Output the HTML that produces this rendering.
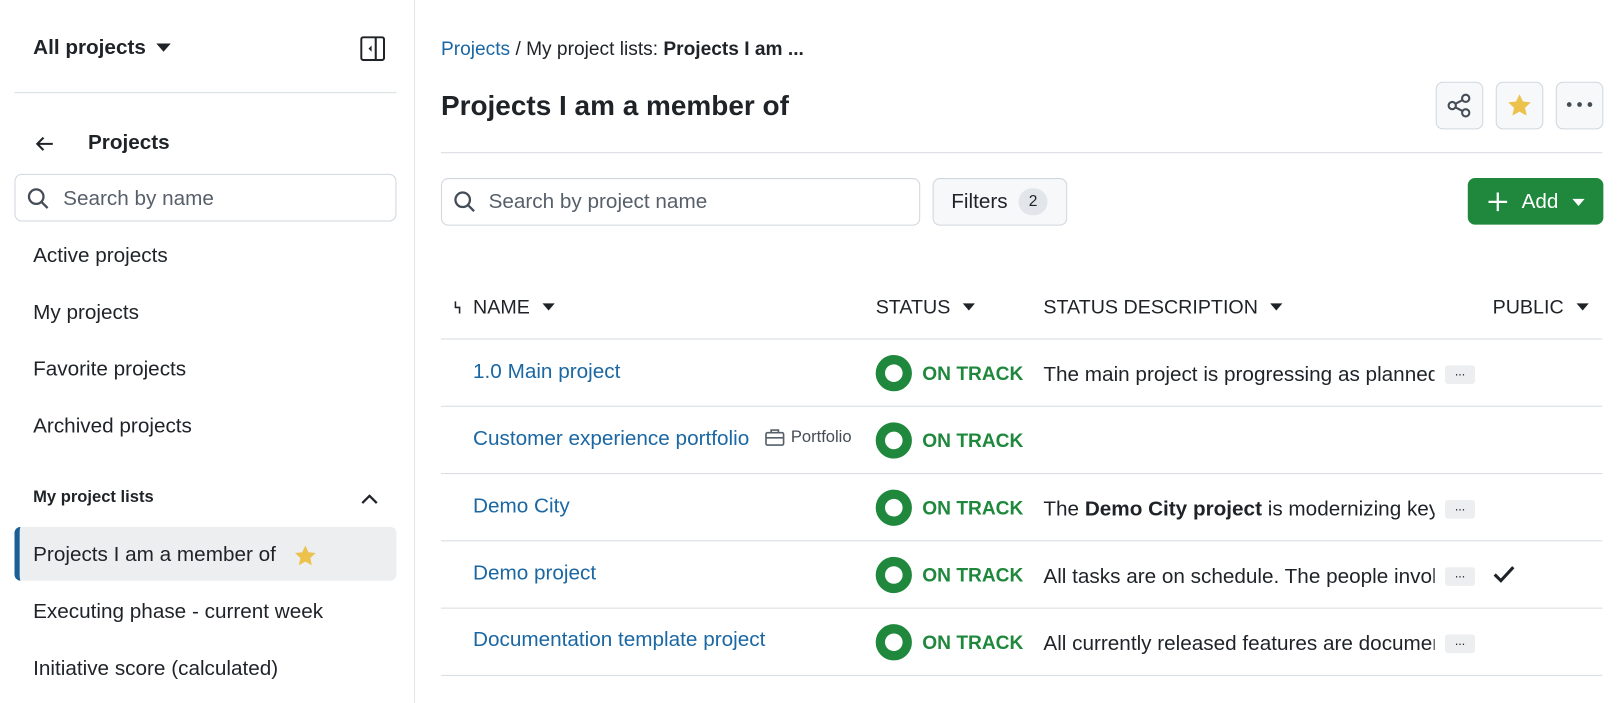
<!DOCTYPE html>
<html><head><meta charset="utf-8"><style>
*{box-sizing:border-box;margin:0;padding:0}
body{width:1623px;height:679px;overflow:hidden;background:#fff;font-family:"Liberation Sans",sans-serif;color:#1f2328;font-size:20px;position:relative}
#w{position:absolute;left:0;top:0;width:1568px;height:656px;transform:scale(1.0351);transform-origin:0 0}
.a{position:absolute;white-space:nowrap}
.side{position:absolute;left:0;top:0;width:401px;height:679px;border-right:1px solid #e4e6e9}
.link{color:#1a67a3}
.hr{position:absolute;height:1px;background:#d8dde3}
.btn{position:absolute;border:1px solid #d0d7de;background:#f6f8fa;border-radius:7px}
.ell{position:absolute;left:1396px;width:29px;height:18px;background:#eceef0;border-radius:3px;font-size:12px;text-align:center;line-height:12px;color:#1f2328}
.st{position:absolute;left:846px;width:35px;height:35px;border-radius:50%;border:9px solid #1f883d}
.stt{position:absolute;left:891px;color:#1f883d;font-weight:bold;font-size:18.5px}
.desc{position:absolute;left:1008px;width:378px;overflow:hidden;white-space:nowrap}
.th{position:absolute;top:287px;white-space:nowrap;font-size:19px}
.th svg{margin-left:12px;vertical-align:3px}
</style></head><body><div id="w">
<div class="side">
<div class="a" style="left:32px;top:35px;font-weight:bold">All projects</div>
<svg class="a" style="left:151px;top:42px" width="14" height="8"><path d="M0 0h14L7 8z" fill="#1f2328"/></svg>
<svg class="a" style="left:348px;top:35px" width="24" height="24" fill="none" stroke="#1f2328" stroke-width="2"><rect x="1" y="1" width="22" height="22" rx="2"/><path d="M15 1v22"/><path d="M11 9v6l-3-3z" fill="#1f2328" stroke="none"/></svg>
<div class="hr" style="left:14px;top:89px;width:369px"></div>
<svg class="a" style="left:34px;top:131px" width="18" height="16" fill="none" stroke="#1f2328" stroke-width="2"><path d="M17 8H2M8 2L2 8l6 6"/></svg>
<div class="a" style="left:85px;top:127px;font-weight:bold">Projects</div>
<div class="a" style="left:14px;top:168px;width:369px;height:46px;border:1px solid #d0d7de;border-radius:7px"></div>
<svg class="a" style="left:26px;top:181px" width="22" height="22" fill="none" stroke="#444c56" stroke-width="2.2"><circle cx="9" cy="9" r="7"/><path d="M14 14l6 6"/></svg>
<div class="a" style="left:61px;top:181px;color:#57606a">Search by name</div>
<div class="a" style="left:32px;top:236px">Active projects</div>
<div class="a" style="left:32px;top:291px">My projects</div>
<div class="a" style="left:32px;top:346px">Favorite projects</div>
<div class="a" style="left:32px;top:401px">Archived projects</div>
<div class="a" style="left:32px;top:472px;font-weight:bold;font-size:16px">My project lists</div>
<svg class="a" style="left:349px;top:477px" width="16" height="10" fill="none" stroke="#1f2328" stroke-width="2.2"><path d="M1 9l7-7 7 7"/></svg>
<div class="a" style="left:14px;top:509px;width:369px;height:52px;background:#eceef0;border-radius:6px;border-left:5px solid #1a5f96"></div>
<div class="a" style="left:32px;top:525px">Projects I am a member of</div>
<svg class="a" style="left:284px;top:526px" width="22" height="21"><path d="M11 1l3 6.5 7 .8-5.2 4.8 1.5 7L11 16.6 4.7 20.1l1.5-7L1 8.3l7-.8z" fill="#ecc24c"/></svg>
<div class="a" style="left:32px;top:580px">Executing phase - current week</div>
<div class="a" style="left:32px;top:635px">Initiative score (calculated)</div>
</div>

<div class="a" style="left:426px;top:36px;font-size:18.5px"><span class="link">Projects</span> / My project lists: <b>Projects I am ...</b></div>
<div class="a" style="left:426px;top:87px;font-size:27px;font-weight:bold">Projects I am a member of</div>
<div class="btn" style="left:1387px;top:79px;width:46px;height:46px"></div>
<svg class="a" style="left:1397px;top:89px" width="26" height="26" fill="none" stroke="#444c56" stroke-width="2"><circle cx="19" cy="6" r="3.5"/><circle cx="6" cy="13" r="3.5"/><circle cx="19" cy="20" r="3.5"/><path d="M9 11.3l7-3.6M9 14.7l7 3.6"/></svg>
<div class="btn" style="left:1445px;top:79px;width:46px;height:46px"></div>
<svg class="a" style="left:1456px;top:90px" width="24" height="23"><path d="M12 1l3.3 7 7.6.9-5.6 5.2 1.6 7.6L12 17.9 5.1 21.7l1.6-7.6L1.1 8.9 8.7 8z" fill="#ecc24c"/></svg>
<div class="btn" style="left:1503px;top:79px;width:46px;height:46px"></div>
<svg class="a" style="left:1512px;top:97px" width="28" height="8" fill="#444c56"><circle cx="4" cy="4" r="2.3"/><circle cx="14" cy="4" r="2.3"/><circle cx="24" cy="4" r="2.3"/></svg>
<div class="hr" style="left:426px;top:147px;width:1122px"></div>

<div class="a" style="left:426px;top:172px;width:463px;height:46px;border:1px solid #d0d7de;border-radius:7px"></div>
<svg class="a" style="left:438px;top:184px" width="22" height="22" fill="none" stroke="#444c56" stroke-width="2.2"><circle cx="9" cy="9" r="7"/><path d="M14 14l6 6"/></svg>
<div class="a" style="left:472px;top:184px;color:#57606a">Search by project name</div>
<div class="btn" style="left:901px;top:172px;width:130px;height:46px"></div>
<div class="a" style="left:919px;top:184px">Filters</div>
<div class="a" style="left:984px;top:182px;width:28px;height:26px;border-radius:13px;background:#e2e5e9;font-size:15px;text-align:center;line-height:26px">2</div>
<div class="a" style="left:1418px;top:172px;width:131px;height:45px;background:#1f883d;border-radius:7px"></div>
<svg class="a" style="left:1437px;top:185px" width="20" height="20" stroke="#fff" stroke-width="2.2"><path d="M10 1v18M1 10h18"/></svg>
<div class="a" style="left:1470px;top:184px;color:#fff;font-size:20px">Add</div>
<svg class="a" style="left:1519px;top:192px" width="12" height="7"><path d="M0 0h12L6 7z" fill="#fff"/></svg>

<svg class="a" style="left:438px;top:291px" width="8" height="12" fill="none" stroke="#1f2328" stroke-width="1.5"><path d="M2 0v6h4v6"/></svg>
<div class="th" style="left:457px">NAME<svg width="12" height="7"><path d="M0 0h12L6 7z" fill="#1f2328"/></svg></div>
<div class="th" style="left:846px">STATUS<svg width="12" height="7"><path d="M0 0h12L6 7z" fill="#1f2328"/></svg></div>
<div class="th" style="left:1008px">STATUS DESCRIPTION<svg width="12" height="7"><path d="M0 0h12L6 7z" fill="#1f2328"/></svg></div>
<div class="th" style="left:1442px">PUBLIC<svg width="12" height="7"><path d="M0 0h12L6 7z" fill="#1f2328"/></svg></div>
<div class="hr" style="left:426px;top:327px;width:1122px"></div>

<div class="a link" style="left:457px;top:348px">1.0 Main project</div>
<div class="st" style="top:343px"></div><div class="stt" style="top:350px">ON TRACK</div>
<div class="desc" style="top:351px">The main project is progressing as planned</div><div class="ell" style="top:353px">...</div>
<div class="hr" style="left:426px;top:392px;width:1122px"></div>

<div class="a link" style="left:457px;top:413px">Customer experience portfolio</div>
<svg class="a" style="left:739px;top:414px" width="19" height="17" fill="none" stroke="#57606a" stroke-width="1.6"><rect x="1" y="4" width="17" height="12" rx="1.5"/><path d="M6 4V1.5h7V4M1 9h17"/></svg>
<div class="a" style="left:764px;top:414px;font-size:16px;color:#444c56">Portfolio</div>
<div class="st" style="top:408px"></div><div class="stt" style="top:415px">ON TRACK</div>
<div class="hr" style="left:426px;top:457px;width:1122px"></div>

<div class="a link" style="left:457px;top:478px">Demo City</div>
<div class="st" style="top:473px"></div><div class="stt" style="top:480px">ON TRACK</div>
<div class="desc" style="top:481px">The <b>Demo City project</b> is modernizing key</div><div class="ell" style="top:483px">...</div>
<div class="hr" style="left:426px;top:522px;width:1122px"></div>

<div class="a link" style="left:457px;top:543px">Demo project</div>
<div class="st" style="top:538px"></div><div class="stt" style="top:545px">ON TRACK</div>
<div class="desc" style="top:546px">All tasks are on schedule. The people involved</div><div class="ell" style="top:548px">...</div>
<svg class="a" style="left:1442px;top:546px" width="22" height="18" fill="none" stroke="#1f2328" stroke-width="3"><path d="M2 9l6 6L20 2"/></svg>
<div class="hr" style="left:426px;top:587px;width:1122px"></div>

<div class="a link" style="left:457px;top:607px">Documentation template project</div>
<div class="st" style="top:603px"></div><div class="stt" style="top:610px">ON TRACK</div>
<div class="desc" style="top:611px">All currently released features are documented</div><div class="ell" style="top:613px">...</div>
<div class="hr" style="left:426px;top:652px;width:1122px"></div>
</div></body></html>
